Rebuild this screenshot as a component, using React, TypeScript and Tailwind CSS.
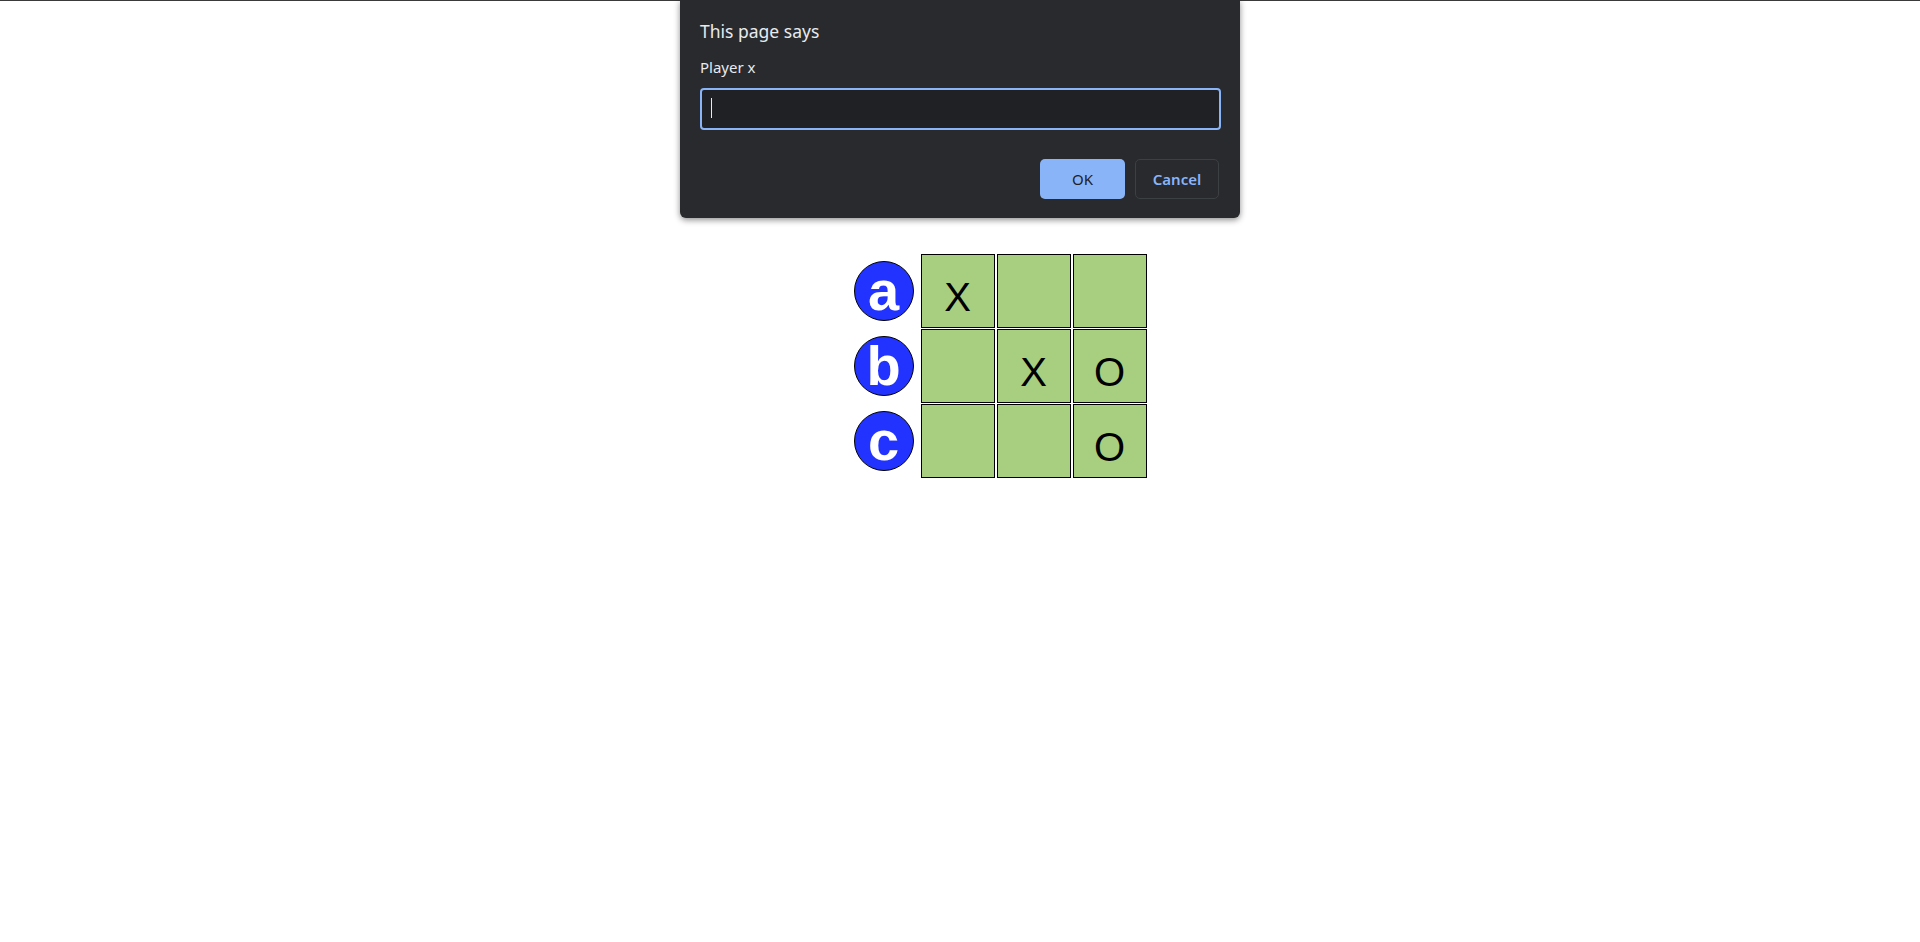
import { useState } from "react";

type Mark = "X" | "O" | "";

const rows: { label: string; cells: Mark[] }[] = [
    { label: "a", cells: ["X", "", ""] },
    { label: "b", cells: ["", "X", "O"] },
    { label: "c", cells: ["", "", "O"] },
];

function PromptDialog() {
    const [name, setName] = useState("");

    return (
        <div className="absolute left-[680px] top-0 w-[560px] h-[218px] bg-[#292a2d] rounded-b-[6px] shadow-[0_2px_6px_rgba(0,0,0,0.45)] px-[20px] pt-[19px] font-['Noto_Sans','Open_Sans',sans-serif]">
            <div className="text-[17.5px] leading-[24px] text-[#e8eaed]">This page says</div>
            <div className="mt-[14px] text-[15px] leading-[20px] text-[#e8eaed]">Player x</div>
            <div className="relative mt-[11px]">
                <input
                    value={name}
                    onChange={(e) => setName(e.target.value)}
                    className="block w-[521px] h-[42px] rounded-[4px] border-2 border-[#8ab4f8] bg-[#202124] px-[10px] text-[15px] text-[#e8eaed] caret-transparent outline-none"
                />
                {/* blinking caret as captured */}
                <span className="absolute left-[11px] top-[10px] w-px h-[20px] bg-[#e8eaed]" />
            </div>
            <div className="mt-[29px] flex justify-end gap-[10px] pr-[1px]">
                <button className="w-[85px] h-[40px] rounded-[5px] bg-[#8ab4f8] text-[#202124] text-[15px]">
                    OK
                </button>
                <button className="w-[84px] h-[40px] rounded-[5px] border border-[#3c4043] text-[#8ab4f8] text-[15px] font-semibold">
                    Cancel
                </button>
            </div>
        </div>
    );
}

export default function App() {
    return (
        <div className="relative min-h-[942px] bg-white">
            <div className="h-px bg-[#3a3a3a]" />

            <div className="mt-[253px] flex justify-center pl-[80px]">
                <div className="flex flex-col gap-[1px]">
                    {rows.map((row) => (
                        <div key={row.label} className="flex items-center">
                            <div className="w-[60px] h-[60px] rounded-full border border-black bg-[#2233ff] flex items-center justify-center text-white font-bold text-[56px] leading-[58px] font-['Liberation_Sans',Arial,sans-serif]">
                                {row.label}
                            </div>
                            <div className="ml-[7px] flex gap-[2px]">
                                {row.cells.map((mark, i) => (
                                    <div
                                        key={i}
                                        className="w-[74px] h-[74px] border border-black bg-[#a8cf7f] flex items-center justify-center pt-[12px] text-[40px] text-black font-['Liberation_Sans',Arial,sans-serif]"
                                    >
                                        {mark}
                                    </div>
                                ))}
                            </div>
                        </div>
                    ))}
                </div>
            </div>

            <PromptDialog />
        </div>
    );
}
